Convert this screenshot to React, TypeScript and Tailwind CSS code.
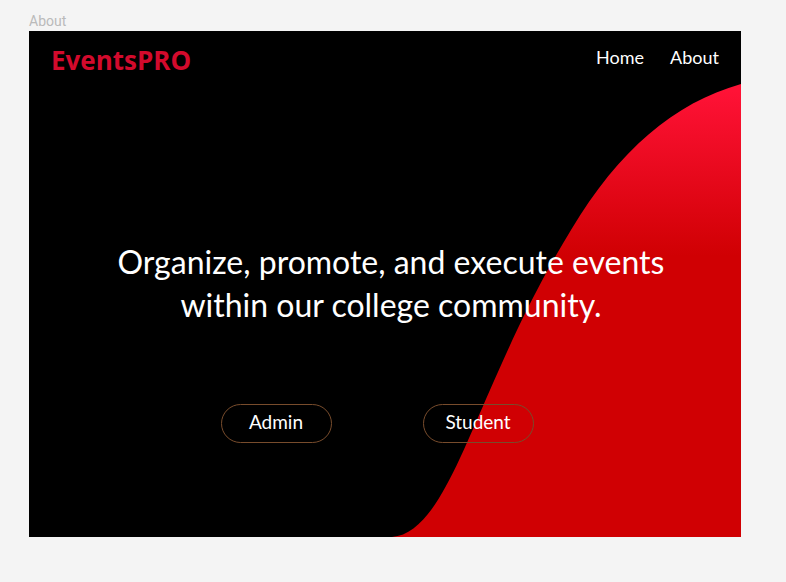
const roles = ["Admin", "Student"];

function Wave() {
  return (
    <svg
      className="absolute inset-0 h-full w-full"
      viewBox="0 0 712 506"
      preserveAspectRatio="none"
      aria-hidden="true"
    >
      <defs>
        <linearGradient id="wave" gradientUnits="userSpaceOnUse" x1="0" y1="60" x2="0" y2="225">
          <stop offset="0" stopColor="#ff1236" />
          <stop offset="1" stopColor="#d00003" />
        </linearGradient>
      </defs>
      <path
        d="M363 506C403 503 428 434 461 359C478 321 500 268 542 199C590 119 645 72 712 53V506Z"
        fill="url(#wave)"
      />
    </svg>
  );
}

export default function App() {
  return (
    <div className="flex min-h-screen flex-col bg-[#f4f4f4] pt-3 pr-[45px] pb-[45px] pl-7 font-['Lato',sans-serif]">
      <p className="pl-px font-['Roboto',sans-serif] text-sm leading-[19px] text-[#bababa]">About</p>
      <div className="relative ml-px flex flex-1 flex-col bg-black">
        <Wave />
        <header className="relative flex items-start justify-between px-[22px] pt-[14px]">
          <span className="font-['Open_Sans',sans-serif] text-[26px] leading-[30px] font-bold text-[#d30a2c]">
            EventsPRO
          </span>
          <nav className="flex gap-[26px] text-lg leading-6 text-white">
            <a href="#home">Home</a>
            <a href="#about">About</a>
          </nav>
        </header>
        <main className="relative flex flex-1 flex-col items-center pt-[165px]">
          <h1 className="pl-3 text-center text-[32px] leading-[43px] font-normal text-white">
            Organize, promote, and execute events
            <br />
            within our college community.
          </h1>
          <div className="mt-[78px] mr-4 flex gap-[91px]">
            {roles.map((role) => (
              <button
                key={role}
                type="button"
                className="h-[39px] w-[111px] rounded-full border border-[#784c2c] pb-1 text-[19px] leading-6 text-white"
              >
                {role}
              </button>
            ))}
          </div>
        </main>
      </div>
    </div>
  );
}
